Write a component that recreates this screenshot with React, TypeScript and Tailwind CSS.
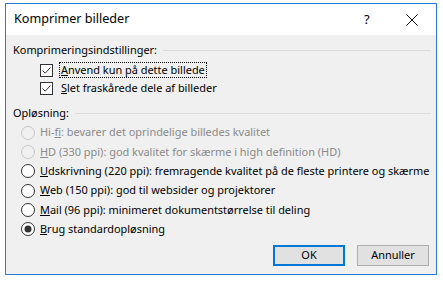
import React from 'react';

const font = { fontFamily: '"Noto Sans", "Open Sans", sans-serif' };

const Check = () => (
  <svg width="13" height="13" viewBox="0 0 13 13" className="shrink-0">
    <rect x="0.5" y="0.5" width="12" height="12" fill="#fff" stroke="#333" />
    <path d="M2.5 6.5 L5.2 9.2 L10.5 3.5" fill="none" stroke="#333" strokeWidth="1" />
  </svg>
);

const Radio = ({ checked, disabled }: { checked?: boolean; disabled?: boolean }) => (
  <svg width="14" height="14" viewBox="0 0 14 14" className="shrink-0">
    <circle cx="7" cy="7" r="6.5" fill={disabled ? '#f0f0f0' : '#fff'} stroke={disabled ? '#c6c6c6' : '#333'} />
    {checked && <circle cx="7" cy="7" r="3.5" fill="#333" />}
  </svg>
);

const GroupHeader = ({ label }: { label: string }) => (
  <div className="flex items-center h-4 gap-1.5">
    <span className="whitespace-nowrap">{label}</span>
    <div className="flex-1 h-px bg-[#dcdcdc]" />
  </div>
);

const options = [
  { key: 'Hi-', u: 'f', rest: 'i: bevarer det oprindelige billedes kvalitet', disabled: true },
  { key: '', u: 'H', rest: 'D (330 ppi): god kvalitet for skærme i high definition (HD)', disabled: true },
  { key: '', u: 'U', rest: 'dskrivning (220 ppi): fremragende kvalitet på de fleste printere og skærme' },
  { key: '', u: 'W', rest: 'eb (150 ppi): god til websider og projektorer' },
  { key: '', u: 'M', rest: 'ail (96 ppi): minimeret dokumentstørrelse til deling' },
  { key: '', u: 'B', rest: 'rug standardopløsning', checked: true },
];

export default function App() {
  return (
    <div className="w-[443px] h-[281px] bg-white pt-[3px] pl-[5px] text-[10.95px] text-black" style={font}>
      <div className="w-[432px] h-[272px] border border-[#2b7bd0] flex flex-col bg-[#f0f0f0]">
        <div className="h-[31px] bg-white flex items-center pl-2 shrink-0">
          <span className="flex-1 text-[12.6px]">Komprimer billeder</span>
          <span className="w-[10px] mr-[32px] text-[13px]">?</span>
          <svg width="12" height="12" viewBox="0 0 12 12" className="mr-[18px]">
            <path d="M0.5 0.5 L11.5 11.5 M11.5 0.5 L0.5 11.5" stroke="#111" strokeWidth="1" />
          </svg>
        </div>
        <div className="flex flex-col pl-[7px] pr-[5px] pt-[7px]">
          <GroupHeader label="Komprimeringsindstillinger:" />
          <div className="flex flex-col pl-[27px] pt-[3px]">
            <div className="h-[18px] flex items-center gap-[7px]">
              <Check />
              <span className="outline outline-1 outline-dotted outline-black px-px leading-[14px]">
                <u>A</u>nvend kun på dette billede
              </span>
            </div>
            <div className="h-[18px] flex items-center gap-[8px]">
              <Check />
              <span>
                <u>S</u>let fraskårede dele af billeder
              </span>
            </div>
          </div>
          <div className="mt-[8px]">
            <GroupHeader label="Opløsning:" />
          </div>
          <div className="flex flex-col pl-[8px] pt-[2px]">
            {options.map((o, i) => (
              <div key={i} className={`h-[19.3px] flex items-center gap-[5px] ${o.disabled ? 'text-[#8a8a8a]' : ''}`}>
                <Radio checked={o.checked} disabled={o.disabled} />
                <span className="whitespace-nowrap">
                  {o.key}
                  <u>{o.u}</u>
                  {o.rest}
                </span>
              </div>
            ))}
          </div>
          <div className="flex justify-end gap-[12px] pr-[2px] mt-[6px]">
            <button className="w-[72px] h-[21px] bg-[#e1e1e1] border-2 border-[#0078d7] flex items-center justify-center">
              OK
            </button>
            <button className="w-[72px] h-[21px] bg-[#e1e1e1] border border-[#adadad] flex items-center justify-center">
              Annuller
            </button>
          </div>
        </div>
      </div>
    </div>
  );
}
